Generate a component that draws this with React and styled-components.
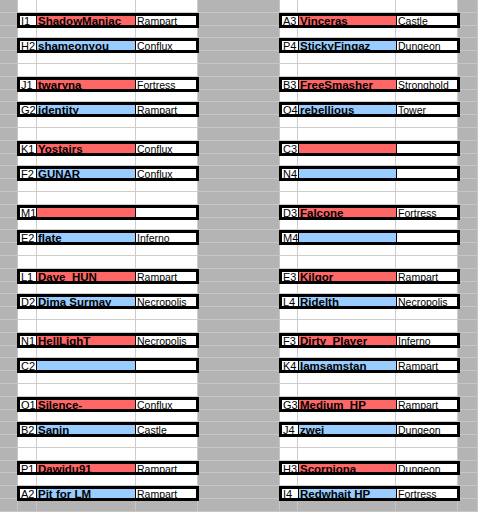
import React from 'react';
import styled, { createGlobalStyle } from 'styled-components';

const COLS = [18, 19, 99, 62, 82, 18, 98, 62, 20];
const ROW_COUNT = 40;
const ROW_H = 12.8;
// columns that hold the white "print area"
const WHITE_COLS = [1, 2, 3, 5, 6, 7];
const LAST_WHITE_ROW = 38;

const RED = '#ff6666';
const BLUE = '#99ccff';

const left = [
  { row: 1, id: 'I1', name: 'ShadowManiac', town: 'Rampart', fill: RED },
  { row: 3, id: 'H2', name: 'shameonyou', town: 'Conflux', fill: BLUE },
  { row: 6, id: 'J1', name: 'twaryna', town: 'Fortress', fill: RED },
  { row: 8, id: 'G2', name: 'identity', town: 'Rampart', fill: BLUE },
  { row: 11, id: 'K1', name: 'Yostairs', town: 'Conflux', fill: RED },
  { row: 13, id: 'F2', name: 'GUNAR', town: 'Conflux', fill: BLUE },
  { row: 16, id: 'M1', name: '', town: '', fill: RED },
  { row: 18, id: 'E2', name: 'flate', town: 'Inferno', fill: BLUE },
  { row: 21, id: 'L1', name: 'Dave_HUN', town: 'Rampart', fill: RED },
  { row: 23, id: 'D2', name: 'Dima Surmay', town: 'Necropolis', fill: BLUE },
  { row: 26, id: 'N1', name: 'HellLighT', town: 'Necropolis', fill: RED },
  { row: 28, id: 'C2', name: '', town: '', fill: BLUE },
  { row: 31, id: 'O1', name: 'Silence-', town: 'Conflux', fill: RED },
  { row: 33, id: 'B2', name: 'Sanin', town: 'Castle', fill: BLUE },
  { row: 36, id: 'P1', name: 'Dawidu91', town: 'Rampart', fill: RED },
  { row: 38, id: 'A2', name: 'Pit for LM', town: 'Rampart', fill: BLUE },
];

const right = [
  { row: 1, id: 'A3', name: 'Vinceras', town: 'Castle', fill: RED },
  { row: 3, id: 'P4', name: 'StickyFingaz', town: 'Dungeon', fill: BLUE },
  { row: 6, id: 'B3', name: 'FreeSmasher', town: 'Stronghold', fill: RED },
  { row: 8, id: 'O4', name: 'rebellious', town: 'Tower', fill: BLUE },
  { row: 11, id: 'C3', name: '', town: '', fill: RED },
  { row: 13, id: 'N4', name: '', town: '', fill: BLUE },
  { row: 16, id: 'D3', name: 'Falcone', town: 'Fortress', fill: RED },
  { row: 18, id: 'M4', name: '', town: '', fill: BLUE },
  { row: 21, id: 'E3', name: 'Kilgor', town: 'Rampart', fill: RED },
  { row: 23, id: 'L4', name: 'Ridelth', town: 'Necropolis', fill: BLUE },
  { row: 26, id: 'F3', name: 'Dirty_Player', town: 'Inferno', fill: RED },
  { row: 28, id: 'K4', name: 'Iamsamstan', town: 'Rampart', fill: BLUE },
  { row: 31, id: 'G3', name: 'Medium_HP', town: 'Rampart', fill: RED },
  { row: 33, id: 'J4', name: 'zwei', town: 'Dungeon', fill: BLUE },
  { row: 36, id: 'H3', name: 'Scorpiona', town: 'Dungeon', fill: RED },
  { row: 38, id: 'I4', name: 'Redwhait HP', town: 'Fortress', fill: BLUE },
];

const GlobalStyle = createGlobalStyle`
  html, body {
    margin: 0;
    padding: 0;
    background: #b4b4b4;
    overflow: hidden;
  }
  body {
    font-family: "Liberation Sans", Arial, sans-serif;
  }
`;

const Sheet = styled.div`
  display: grid;
  width: 478px;
  height: 512px;
  overflow: hidden;
  background: #b4b4b4;
`;

const Layer = styled.div`
  grid-area: 1 / 1;
  display: grid;
  grid-template-columns: ${COLS.map((w) => `${w}px`).join(' ')};
  grid-template-rows: repeat(${ROW_COUNT}, ${ROW_H}px);
`;

const Cell = styled.div`
  box-sizing: border-box;
  background: ${(p) => (p.$white ? '#ffffff' : '#b4b4b4')};
  border-right: 1px solid ${(p) => (p.$white ? '#cdcdcd' : '#c6c6c6')};
  border-bottom: 1px solid ${(p) => (p.$white ? '#cdcdcd' : '#c6c6c6')};
`;

const Entry = styled.div`
  box-sizing: border-box;
  grid-row: ${(p) => p.$row + 1};
  grid-column: ${(p) => (p.$side === 'left' ? '2 / 5' : '6 / 9')};
  margin: 0 ${(p) => (p.$side === 'left' ? '-1px' : '-2px')} -2px -1px;
  display: grid;
  grid-template-columns: ${(p) => (p.$side === 'left' ? '17px 99px 1fr' : '17px 98px 1fr')};
  border: 3px solid #000;
  background: #fff;
  color: #000;
  white-space: nowrap;
`;

const IdCell = styled.div`
  overflow: hidden;
  border-right: 1px solid #000;
  padding-left: 1px;
  font-size: 11px;
  line-height: 10px;
`;

const NameCell = styled.div`
  overflow: hidden;
  background: ${(p) => p.$fill};
  border-right: 1px solid #000;
  padding-left: 1px;
  font-size: 11.5px;
  font-weight: bold;
  line-height: 11.6px;
`;

const TownCell = styled.div`
  overflow: hidden;
  padding-left: 1px;
  font-size: 10.5px;
  line-height: 10.3px;
`;

const Row = ({ entry, side }) => (
  <Entry $row={entry.row} $side={side}>
    <IdCell>{entry.id}</IdCell>
    <NameCell $fill={entry.fill}>{entry.name}</NameCell>
    <TownCell>{entry.town}</TownCell>
  </Entry>
);

export default function App() {
  const cells = [];
  for (let r = 0; r < ROW_COUNT; r++) {
    for (let c = 0; c < COLS.length; c++) {
      const white = r <= LAST_WHITE_ROW && WHITE_COLS.includes(c);
      cells.push(<Cell key={`${r}-${c}`} $white={white} />);
    }
  }
  return (
    <>
      <GlobalStyle />
      <Sheet>
        <Layer>{cells}</Layer>
        <Layer>
          {left.map((e) => (
            <Row key={e.id} entry={e} side='left' />
          ))}
          {right.map((e) => (
            <Row key={e.id} entry={e} side='right' />
          ))}
        </Layer>
      </Sheet>
    </>
  );
}
